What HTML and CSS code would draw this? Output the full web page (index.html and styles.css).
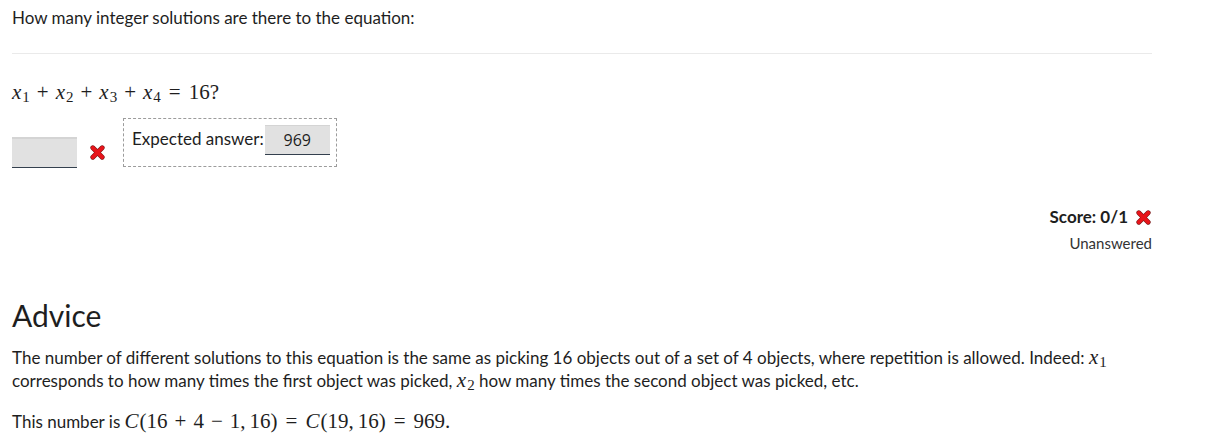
FILE: index.html
```html
<!DOCTYPE html>
<html>
<head>
<meta charset="utf-8">
<link rel="stylesheet" href="styles.css">
</head>
<body>
<div class="page">
  <p class="prompt">How many integer solutions are there to the equation:</p>
  <hr class="rule">
  <p class="eq"><span class="m"><i>x</i><sub>1</sub><span class="bin">+</span><i>x</i><sub>2</sub><span class="bin">+</span><i>x</i><sub>3</sub><span class="bin">+</span><i>x</i><sub>4</sub><span class="rel">=</span>16</span>?</p>
  <div class="answer-row">
    <span class="input"></span>
    <svg class="cross" viewBox="0 0 16 16" width="15" height="15"><path d="M3 3 L13 13 M13 3 L3 13" stroke="#7a1a1a" stroke-width="5.2" stroke-linecap="round"/><path d="M3 3 L13 13 M13 3 L3 13" stroke="#e8141a" stroke-width="4" stroke-linecap="round"/></svg>
    <div class="expected">
      <span class="exp-label">Expected answer:</span>
      <span class="exp-value">969</span>
    </div>
  </div>
  <div class="score">
    <div class="score-line">Score: 0/1 <svg class="cross" viewBox="0 0 16 16" width="15" height="15"><path d="M3 3 L13 13 M13 3 L3 13" stroke="#7a1a1a" stroke-width="5.2" stroke-linecap="round"/><path d="M3 3 L13 13 M13 3 L3 13" stroke="#e8141a" stroke-width="4" stroke-linecap="round"/></svg></div>
    <div class="status">Unanswered</div>
  </div>
  <h2 class="advice">Advice</h2>
  <p class="para">The number of different solutions to this equation is the same as picking 16 objects out of a set of 4 objects, where repetition is allowed. Indeed: <span class="m"><i>x</i><sub>1</sub></span> corresponds to how many times the first object was picked, <span class="m"><i>x</i><sub>2</sub></span> how many times the second object was picked, etc.</p>
  <p class="para last">This number is <span class="m"><i>C</i>(16<span class="bin">+</span>4<span class="bin">&minus;</span>1,<span class="thin"></span>16)<span class="rel">=</span><i>C</i>(19,<span class="thin"></span>16)<span class="rel">=</span>969.</span></p>
</div>
</body>
</html>
```

FILE: styles.css
```css
html, body {
  margin: 0;
  padding: 0;
  background: #fff;
}
body {
  font-family: "Lato", "Liberation Sans", sans-serif;
  font-size: 17px;
  color: #1e1e1e;
}
.page {
  width: 1140px;
  padding: 6px 0 0 12px;
}
.prompt {
  margin: 0;
  line-height: 24px;
}
.rule {
  border: 0;
  border-top: 1px solid #eaeaea;
  margin: 23px 0 0 0;
  height: 0;
}
.m {
  font-family: "Liberation Serif", "DejaVu Serif", serif;
  font-size: 21px;
  white-space: nowrap;
}
.m i {
  font-style: italic;
  margin-right: 1px;
}
.m sub {
  font-size: 15px;
  vertical-align: -3px;
  line-height: 0;
}
.bin {
  margin: 0 7px;
}
.rel {
  margin: 0 8px;
}
.thin {
  display: inline-block;
  width: 4px;
}
.eq {
  margin: 26px 0 0 0;
  line-height: 24px;
  font-family: "Liberation Serif", serif;
  font-size: 21px;
}
.answer-row {
  display: flex;
  align-items: flex-end;
  margin-top: 14px;
}
.input {
  display: block;
  width: 65px;
  height: 28px;
  background: #e1e1e1;
  border-top: 2px solid #d4d4d4;
  border-bottom: 1px solid #34404e;
  margin-bottom: -1px;
}
.answer-row > .cross {
  margin: 0 18px 7px 13px;
}
.expected {
  border: 1px dashed #9c9c9c;
  width: 212px;
  height: 47px;
  box-sizing: content-box;
  display: flex;
  align-items: flex-start;
  padding: 0;
}
.exp-label {
  margin: 8px 0 0 8px;
  line-height: 24px;
}
.exp-value {
  display: block;
  margin: 6px 0 0 1px;
  width: 65px;
  height: 28px;
  line-height: 28px;
  text-align: center;
  background: #e1e1e1;
  border-top: 1px solid #d4d4d4;
  border-bottom: 1px solid #34404e;
  font-family: "Open Sans", sans-serif;
  font-size: 16px;
}
.score {
  margin-top: 38px;
  text-align: right;
}
.score-line {
  font-weight: 700;
  line-height: 24px;
  display: flex;
  justify-content: flex-end;
  align-items: center;
  gap: 8px;
}
.score-line .cross {
  margin-right: 1px;
}
.status {
  font-size: 15px;
  color: #333;
  line-height: 20px;
  margin-top: 4px;
}
.advice {
  font-weight: 400;
  font-size: 30px;
  margin: 44px 0 0 0;
  line-height: 36px;
}
.para {
  margin: 13px 0 0 0;
  line-height: 23px;
}
.para.last {
  margin-top: 18px;
}
```
